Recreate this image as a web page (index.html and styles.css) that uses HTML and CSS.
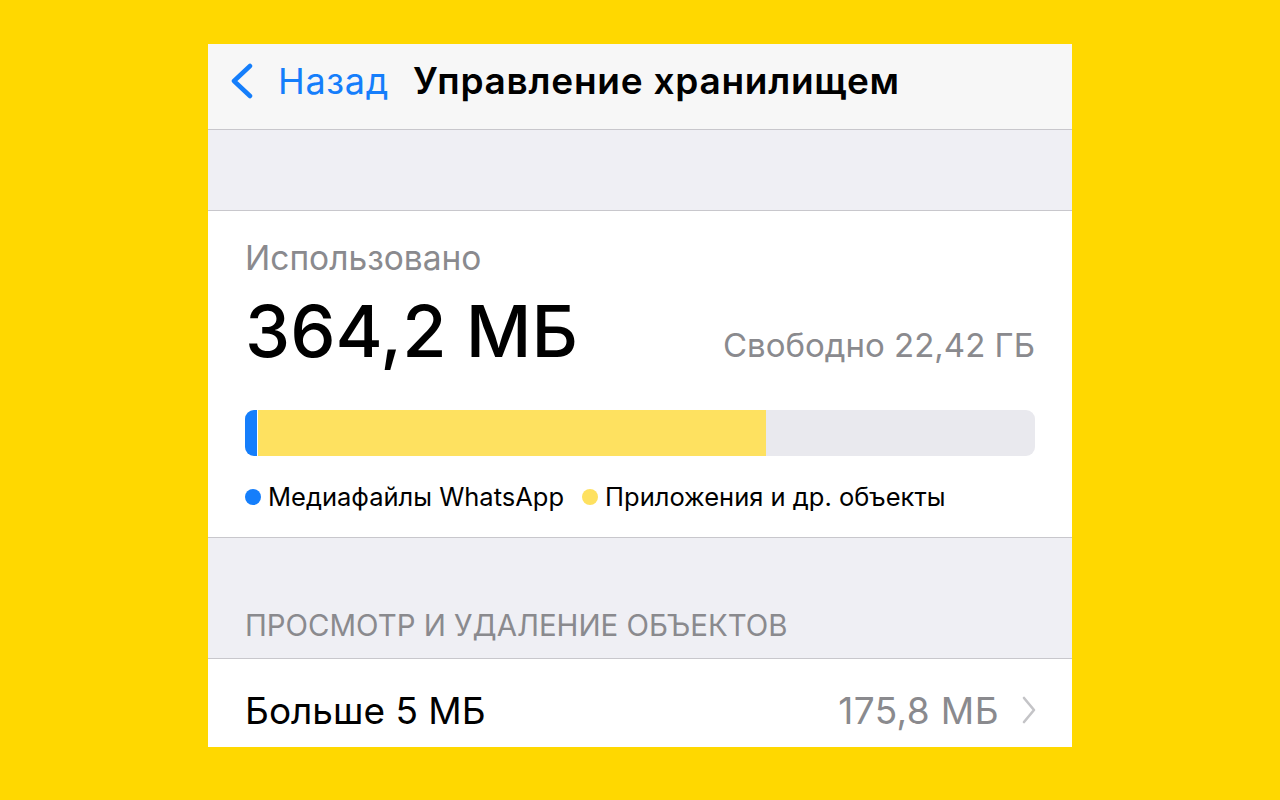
FILE: index.html
```html
<!DOCTYPE html>
<html lang="ru">
  <head>
    <meta charset="UTF-8" />
    <meta name="viewport" content="width=device-width, initial-scale=1.0" />
    <title>Управление хранилищем</title>
    <link rel="stylesheet" href="styles.css">
  </head>
  <body>
    <div class="phone">
      <nav class="navbar">
        <a class="back" href="#">
          <svg class="back-icon" width="26" height="36" viewBox="0 0 26 36">
            <polyline points="21,3 5,18 21,33" />
          </svg>
          <span>Назад</span>
        </a>
        <h1>Управление хранилищем</h1>
      </nav>

      <div class="spacer"></div>

      <section class="usage">
        <p class="label">Использовано</p>
        <div class="totals">
          <span class="used">364,2 МБ</span>
          <span class="free">Свободно 22,42 ГБ</span>
        </div>
        <div class="bar">
          <div class="bar-media" style="width: 1.6%"></div>
          <div class="bar-apps" style="width: 64.3%"></div>
        </div>
        <ul class="legend">
          <li><i class="dot dot-blue"></i>Медиафайлы WhatsApp</li>
          <li><i class="dot dot-yellow"></i>Приложения и др. объекты</li>
        </ul>
      </section>

      <div class="group-title">ПРОСМОТР И УДАЛЕНИЕ ОБЪЕКТОВ</div>

      <div class="row">
        <span class="row-title">Больше 5 МБ</span>
        <span class="row-value">175,8 МБ</span>
        <svg class="chevron" width="16" height="28" viewBox="0 0 16 28">
          <polyline points="3,2 13,14 3,26" />
        </svg>
      </div>
    </div>
  </body>
</html>
```

FILE: styles.css
```css
:root {
  --yellow-bg: #ffd800;
  --blue: #157efb;
  --gray-text: #8a8a8e;
  --gray-bg: #efeff4;
  --separator: #c8c7cc;
}
* {
  margin: 0;
  padding: 0;
  box-sizing: border-box;
}
body {
  font-family: Inter, "Noto Sans", sans-serif;
  background-color: var(--yellow-bg);
  color: #000;
  padding-top: 44px;
}
.phone {
  width: 864px;
  height: 703px;
  margin: 0 auto;
  background: var(--gray-bg);
  overflow: hidden;
}
.navbar {
  height: 86px;
  background: #f7f7f7;
  border-bottom: 1px solid var(--separator);
  display: flex;
  align-items: center;
  padding: 0 0 12px 21px;
  gap: 24px;
}
.back {
  display: flex;
  align-items: center;
  gap: 23px;
  color: var(--blue);
  text-decoration: none;
  font-size: 36px;
  letter-spacing: 0.7px;
}
.back-icon polyline {
  fill: none;
  stroke: var(--blue);
  stroke-width: 4.5;
  stroke-linecap: round;
  stroke-linejoin: round;
}
h1 {
  font-size: 37px;
  font-weight: 600;
  letter-spacing: 0.75px;
}
.spacer {
  height: 81px;
  border-bottom: 1px solid var(--separator);
}
.usage {
  background: #fff;
  padding: 27px 37px 25px 37px;
  border-bottom: 1px solid var(--separator);
}
.label {
  color: var(--gray-text);
  font-size: 33.5px;
  line-height: 40px;
}
.totals {
  display: flex;
  justify-content: space-between;
  align-items: baseline;
  margin-top: 13px;
}
.used {
  font-size: 72px;
  line-height: 80px;
  font-weight: 500;
}
.free {
  color: var(--gray-text);
  font-size: 33px;
}
.bar {
  margin-top: 39px;
  height: 46px;
  border-radius: 9px;
  background: #e9e9ee;
  display: flex;
  overflow: hidden;
}
.bar-media {
  background: var(--blue);
  border-right: 1px solid #fff;
}
.bar-apps {
  background: #fee160;
}
.legend {
  list-style: none;
  display: flex;
  gap: 18px;
  margin-top: 26px;
  font-size: 25.5px;
  line-height: 30px;
}
.legend li {
  display: flex;
  align-items: center;
  gap: 7px;
}
.dot {
  width: 16px;
  height: 16px;
  border-radius: 50%;
}
.dot-blue {
  background: var(--blue);
}
.dot-yellow {
  background: #fee160;
}
.group-title {
  height: 121px;
  display: flex;
  align-items: flex-end;
  padding: 0 37px 16px;
  color: var(--gray-text);
  font-size: 29.4px;
  line-height: 32px;
  border-bottom: 1px solid var(--separator);
}
.row {
  height: 102px;
  background: #fff;
  display: flex;
  align-items: center;
  padding: 0 35px 0 37px;
  font-size: 37px;
}
.row-title {
  flex: 1;
}
.row-value {
  color: var(--gray-text);
  margin-right: 22px;
  letter-spacing: 0.4px;
}
.chevron polyline {
  fill: none;
  stroke: #c4c4c7;
  stroke-width: 2.6;
  stroke-linecap: round;
  stroke-linejoin: round;
}
```
